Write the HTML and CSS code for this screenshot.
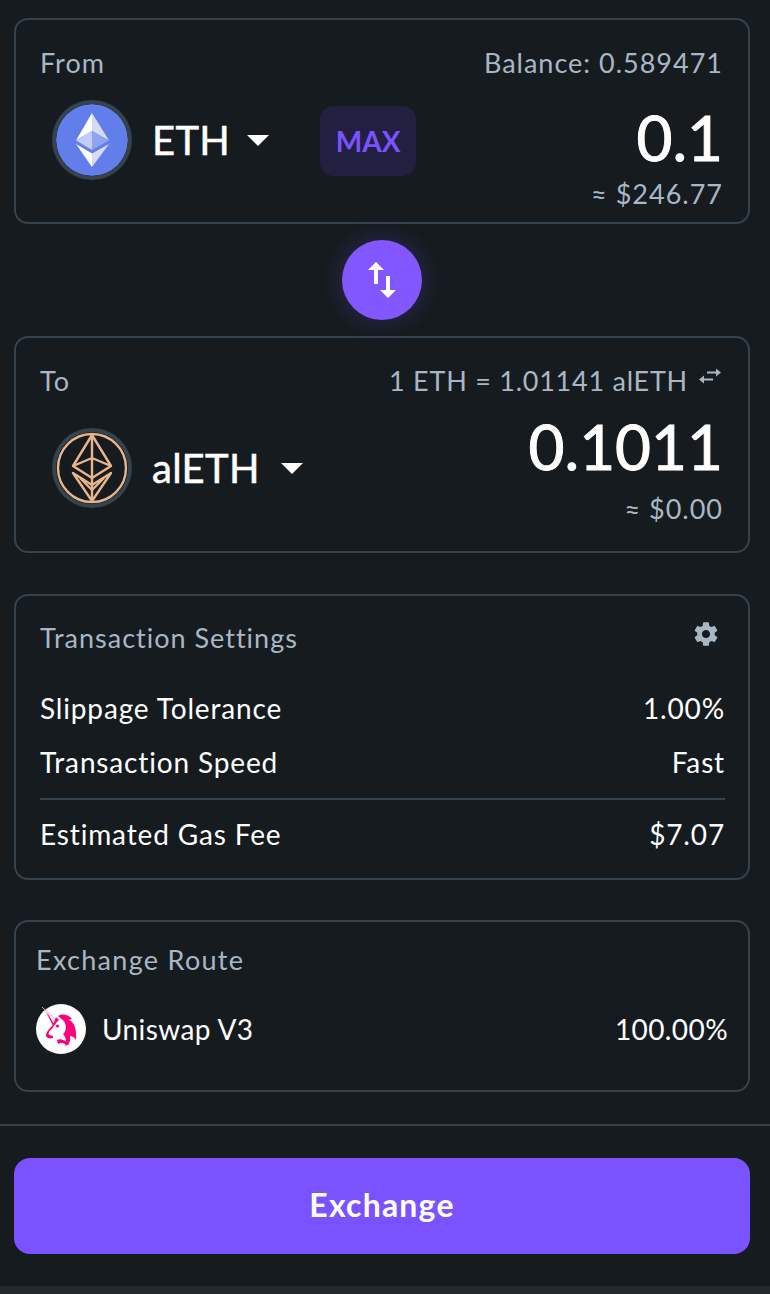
FILE: index.html
```html
<!DOCTYPE html>
<html lang="en">
<head>
  <meta charset="UTF-8" />
  <meta name="viewport" content="width=device-width, initial-scale=1.0"/>
  <title>Exchange</title>
  <link rel="stylesheet" href="styles.css">
</head>
<body>

  <main class="content">
    <!-- From -->
    <section class="card card-from">
      <div class="card-head">
        <span>From</span>
        <span>Balance: 0.589471</span>
      </div>
      <div class="token-row">
        <div class="token-icon">
          <svg viewBox="0 0 72 72">
            <circle cx="36" cy="36" r="36" fill="#627eea"/>
            <path d="M36 9V27L20 36.500z" fill="#fff"/>
            <path d="M36 9V27L53 36.500z" fill="#d5dcf9"/>
            <path d="M36 27L20 36.500 36 46z" fill="#c1ccf7"/>
            <path d="M36 27L53 36.500 36 46z" fill="#8fa3f1"/>
            <path d="M20 40L36 49.500V63z" fill="#fff"/>
            <path d="M53 40L36 49.500V63z" fill="#d5dcf9"/>
          </svg>
        </div>
        <div class="token-name">ETH</div>
        <div class="caret"></div>
        <button class="max-btn">MAX</button>
        <div class="amount">
          <div class="amount-value">0.1</div>
          <div class="amount-usd">≈ $246.77</div>
        </div>
      </div>
    </section>

    <div class="swap-wrap">
      <button class="swap-btn" title="Swap">
        <svg viewBox="0 0 28 36" width="28" height="36">
          <path d="M8 0L16 8H10V22H6V8H0z" fill="#fff"/>
          <path d="M18 14H22V28H28L20 36 12 28H18z" fill="#fff"/>
        </svg>
      </button>
    </div>

    <!-- To -->
    <section class="card card-to">
      <div class="card-head">
        <span>To</span>
        <span class="rate">1 ETH = 1.01141 alETH
          <svg viewBox="0 0 22 16" width="22" height="16">
            <path d="M22 4.500L17 0.500V3.500H8V5.500H17V8.500z" fill="#a9b7c4"/>
            <path d="M0 11.500L5 7.500V10.500H14V12.500H5V15.500z" fill="#a9b7c4"/>
          </svg>
        </span>
      </div>
      <div class="token-row">
        <div class="token-icon">
          <svg viewBox="0 0 72 72" fill="none" stroke="#e8b48a" stroke-width="2.400" stroke-linejoin="round">
            <circle cx="36" cy="36" r="34"/>
            <path d="M36 3L17 34 36 46 55 34z"/>
            <path d="M36 3V69"/>
            <path d="M17 34L36 26 55 34"/>
            <path d="M17 41L36 69 55 41 36 53z"/>
            <path d="M24 46L36 58 48 46"/>
          </svg>
        </div>
        <div class="token-name">alETH</div>
        <div class="caret"></div>
        <div class="amount">
          <div class="amount-value">0.1011</div>
          <div class="amount-usd">≈ $0.00</div>
        </div>
      </div>
    </section>

    <!-- Transaction settings -->
    <section class="card card-settings">
      <div class="settings-head">
        <span>Transaction Settings</span>
        <svg viewBox="0 0 24 24" width="28" height="28">
          <path fill="#a9b7c4" d="M19.430 12.980c.04-.32.07-.64.07-.98s-.03-.66-.07-.98l2.110-1.650c.19-.15.24-.42.12-.64l-2-3.460c-.12-.22-.39-.3-.61-.22l-2.490 1c-.52-.4-1.080-.73-1.690-.98l-.38-2.650C14.460 2.180 14.250 2 14 2h-4c-.25 0-.46.18-.49.42l-.38 2.650c-.61.25-1.170.59-1.690.98l-2.490-1c-.23-.09-.49 0-.61.22l-2 3.460c-.13.22-.07.49.12.64l2.110 1.650c-.04.32-.07.65-.07.98s.03.66.07.98l-2.110 1.650c-.19.15-.24.42-.12.64l2 3.460c.12.22.39.3.61.22l2.490-1c.52.4 1.080.73 1.690.98l.38 2.650c.03.24.24.42.49.42h4c.25 0 .46-.18.49-.42l.38-2.650c.61-.25 1.170-.59 1.690-.98l2.490 1c.23.09.49 0 .61-.22l2-3.460c.12-.22.07-.49-.12-.64l-2.110-1.650zM12 15.500c-1.930 0-3.500-1.570-3.500-3.500s1.570-3.500 3.500-3.500 3.500 1.570 3.500 3.500-1.570 3.500-3.500 3.500z"/>
        </svg>
      </div>
      <div class="setting-row"><span>Slippage Tolerance</span><span>1.00%</span></div>
      <div class="setting-row"><span>Transaction Speed</span><span>Fast</span></div>
      <div class="setting-row setting-total"><span>Estimated Gas Fee</span><span>$7.07</span></div>
    </section>

    <!-- Route -->
    <section class="card card-route">
      <div class="route-title">Exchange Route</div>
      <div class="route-row">
        <div class="route-icon">
          <svg viewBox="0 0 50 50" width="50" height="50">
            <circle cx="25" cy="25" r="25" fill="#fff"/>
            <path d="M6 3L21 17" stroke="#e8a0c4" stroke-width="1"/>
            <path d="M10 8L20 20 17 22z" fill="#ff007a"/>
            <path d="M13 11L19 18.500 17.500 19.500z" fill="#fff"/>
            <path fill="#ff007a" d="M22 12C27 9 33 11 36 15C35 15 34 15 33 16C38 18 41 25 40 36C38 33 36 32 34 32C35 37 33 41 29 42C31 38 30 33 27 30C30 28 31 22 28 17C26 15 24 14 22 12z"/>
            <path fill="#ff007a" d="M17 21L20 13 23 16 19 20 16 25C13 27 12 29 13 31L17 32 17 34C14 35 11 34 10 32C10 28 13 25 17 21z"/>
            <path fill="#ff007a" d="M21 36C25 34 30 36 33 41C29 41 26 37 22 40z"/>
            <circle cx="21.500" cy="22" r="1.600" fill="#ff007a"/>
          </svg>
        </div>
        <span class="route-name">Uniswap V3</span>
        <span class="route-pct">100.00%</span>
      </div>
    </section>
  </main>

  <footer class="footer">
    <button class="exchange-btn">Exchange</button>
  </footer>
  <div class="bottom-strip"></div>

</body>
</html>
```

FILE: styles.css
```css
* {
  box-sizing: border-box;
}

html, body {
  height: 100%;
}

body {
  margin: 0;
  background: #161b1f;
  color: #fff;
  font-family: Lato, "Open Sans", sans-serif;
  overflow: hidden;
}

button {
  font-family: inherit;
  border: none;
  cursor: pointer;
}

.content {
  padding: 18px 20px 32px 14px;
}

.card {
  border: 2px solid #35434e;
  border-radius: 14px;
  width: 736px;
}

.card-from {
  height: 206px;
  padding: 24px 25px 0 24px;
}

.card-to {
  height: 217px;
  padding: 24px 25px 0 24px;
  margin-bottom: 41px;
}

.card-head {
  display: flex;
  justify-content: space-between;
  align-items: center;
  height: 36px;
  font-size: 27px;
  letter-spacing: 1px;
  color: #a9b7c4;
}

.rate {
  display: flex;
  align-items: center;
  gap: 11px;
  letter-spacing: 0.75px;
}

.rate svg {
  margin: -8px 2px 0 0;
}

.token-row {
  display: flex;
  align-items: flex-start;
  margin-top: 20px;
  padding-left: 12px;
}

.card-to .token-row {
  margin-top: 30px;
}

.token-icon {
  width: 80px;
  height: 80px;
  padding: 4px;
  border-radius: 50%;
  background: #35434e;
  flex: none;
}

.token-icon svg {
  display: block;
  width: 72px;
  height: 72px;
  background: #161b1f;
  border-radius: 50%;
}

.token-name {
  margin-left: 20px;
  font-size: 40px;
  line-height: 80px;
  letter-spacing: 0.3px;
  -webkit-text-stroke: 0.5px #fff;
}

.caret {
  margin: 35px 0 0 17px;
  border-left: 11px solid transparent;
  border-right: 11px solid transparent;
  border-top: 11px solid #fff;
}

.card-to .caret {
  margin-left: 21px;
}

.max-btn {
  width: 96px;
  height: 70px;
  margin: 6px 0 0 51px;
  border-radius: 14px;
  background: #231f40;
  color: #7a52ff;
  font-size: 28px;
  font-weight: 700;
}

.amount {
  margin: 1px 0 0 auto;
  text-align: right;
}

.card-to .amount {
  margin-top: -18px;
}

.amount-value {
  font-size: 62px;
  line-height: 72px;
  -webkit-text-stroke: 1px #fff;
}

.amount-usd {
  margin-top: 3px;
  font-size: 27px;
  line-height: 36px;
  letter-spacing: 1px;
  color: #a9b7c4;
}

.card-to .amount-usd {
  margin-top: 9px;
}

.swap-wrap {
  display: flex;
  justify-content: center;
  width: 736px;
  padding: 16px 0;
}

.swap-btn {
  display: flex;
  align-items: center;
  justify-content: center;
  width: 80px;
  height: 80px;
  padding: 0;
  border-radius: 50%;
  background: #8357ff;
  box-shadow: 0 0 24px rgba(122, 82, 255, 0.25);
}

.card-settings {
  height: 286px;
  padding: 24px 23px 0 24px;
  margin-bottom: 40px;
}

.settings-head {
  display: flex;
  justify-content: space-between;
  align-items: flex-start;
  height: 61px;
  padding-right: 5px;
  font-size: 27px;
  letter-spacing: 1px;
  color: #a9b7c4;
}

.settings-head span {
  margin-top: 1px;
}

.setting-row {
  display: flex;
  justify-content: space-between;
  align-items: center;
  height: 54px;
  font-size: 28px;
  letter-spacing: 0.85px;
}

.setting-total {
  border-top: 2px solid #35434e;
  height: 70px;
  margin-top: 9px;
}

.card-route {
  height: 172px;
  padding: 20px 20px 0 20px;
}

.route-title {
  font-size: 27px;
  letter-spacing: 1.3px;
  line-height: 36px;
  color: #a9b7c4;
}

.route-row {
  display: flex;
  align-items: center;
  margin-top: 26px;
  font-size: 28px;
  letter-spacing: 0.4px;
}

.route-icon {
  width: 50px;
  height: 50px;
  flex: none;
}

.route-icon svg {
  display: block;
}

.route-name {
  margin-left: 16px;
}

.route-pct {
  margin-left: auto;
}

.footer {
  border-top: 2px solid #35434e;
  padding: 32px 20px 32px 14px;
}

.exchange-btn {
  display: block;
  width: 736px;
  height: 96px;
  padding: 0 0 4px;
  border-radius: 16px;
  background: #7a52ff;
  color: #fff;
  font-size: 32px;
  font-weight: 700;
  letter-spacing: 1.2px;
}

.bottom-strip {
  height: 8px;
  background: #23292e;
}
```
